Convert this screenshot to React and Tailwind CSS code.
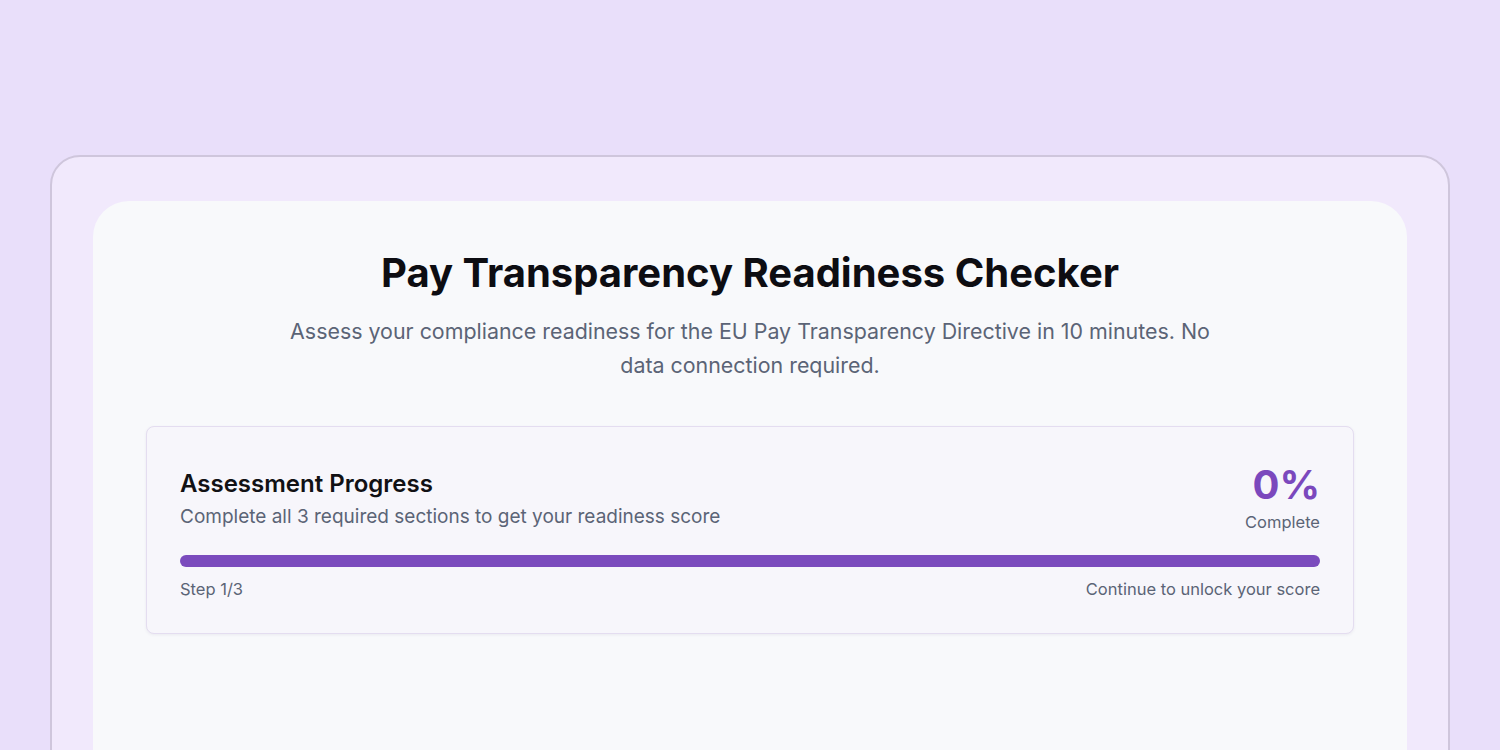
const font = { fontFamily: 'Inter, "Noto Sans", sans-serif' }

const ProgressCard = ({ percent = 0, step = 1, total = 3 }) => (
  <div className="rounded-lg border border-[#e4ddf0] bg-[#f7f6fb] px-[33px] pt-[38px] pb-8 shadow-[0_1px_3px_rgba(80,60,120,0.08)]">
    <div className="flex items-start justify-between">
      <div className="mt-[3px]">
        <h2 className="text-2xl font-semibold leading-8 text-[#111114]">Assessment Progress</h2>
        <p className="mt-[3px] text-[19px] leading-7 text-[#5b6476]">
          Complete all {total} required sections to get your readiness score
        </p>
      </div>
      <div className="text-right">
        <div className="text-[40px] font-bold leading-none text-[#7b48bd]">{percent}%</div>
        <div className="mt-[5px] text-[16.5px] leading-6 text-[#5b6476]">Complete</div>
      </div>
    </div>
    <div className="mt-[21px] h-3 w-full rounded-full bg-[#7b4bbd]" />
    <div className="mt-2.5 flex justify-between text-[16.5px] leading-6 text-[#5b6476]">
      <span>Step {step}/{total}</span>
      <span>Continue to unlock your score</span>
    </div>
  </div>
)

export default function App() {
  return (
    <div className="min-h-screen overflow-hidden bg-[#e9dffa] px-[50px] pt-[155px]" style={font}>
      <div className="rounded-[30px] border-2 border-[#cfc6dc] bg-[#f1e9fc] px-[41px] pt-11 pb-10">
        <div className="h-[700px] rounded-[36px] bg-[#f8f9fb] px-[53px] pt-[52px]">
          <h1 className="text-center text-[40px] font-bold leading-10 text-[#0d0d12]">
            Pay Transparency Readiness Checker
          </h1>
          <p className="mx-auto mt-[21px] max-w-[940px] text-center text-[21.4px] leading-[34px] text-[#5b6476]">
            Assess your compliance readiness for the EU Pay Transparency Directive in 10 minutes. No data connection required.
          </p>
          <div className="mt-[44px]">
            <ProgressCard />
          </div>
        </div>
      </div>
    </div>
  )
}
